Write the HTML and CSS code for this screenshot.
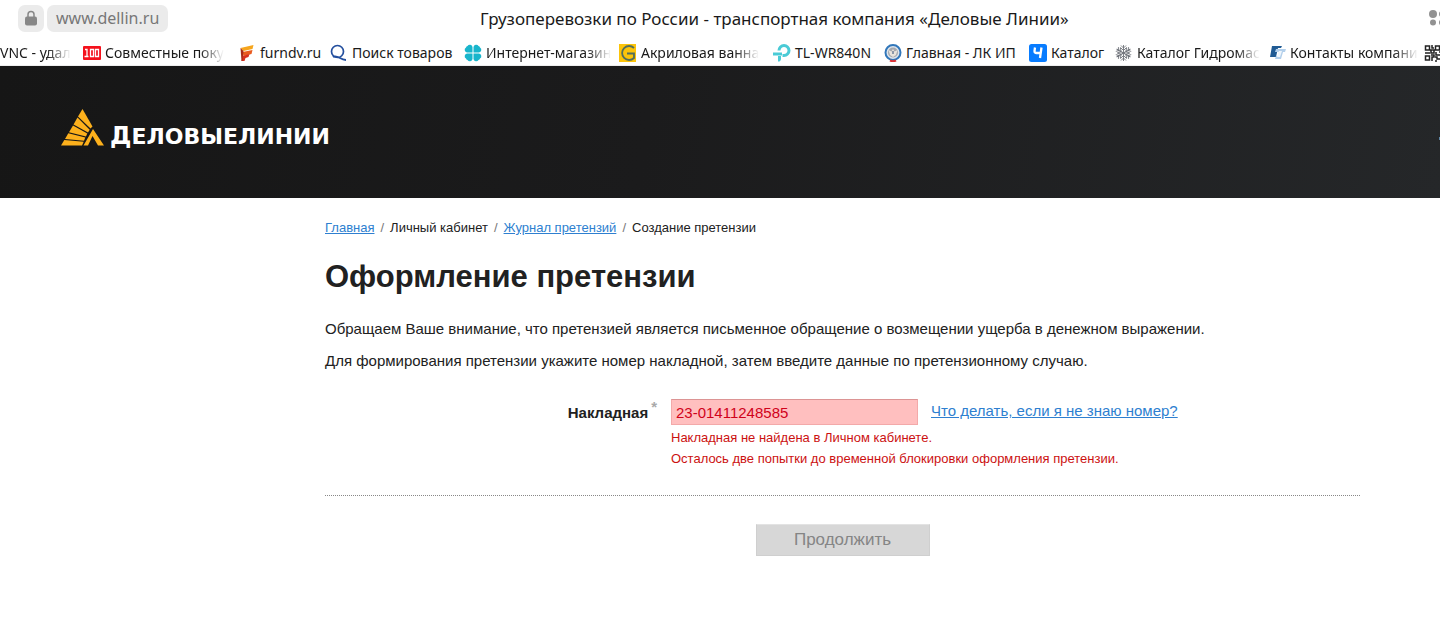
FILE: index.html
```html
<!DOCTYPE html>
<html lang="ru">
<head>
<meta charset="utf-8">
<title>Грузоперевозки по России - транспортная компания «Деловые Линии»</title>
<link rel="stylesheet" href="styles.css">
</head>
<body>
<div class="browser">
  <div class="address-bar">
    <div class="address">
      <button class="lock" type="button" aria-label="Безопасное соединение">
        <svg width="12" height="16" viewBox="0 0 12 16"><path d="M3 7V4.500a3 3 0 0 1 6 0V7" fill="none" stroke="#878787" stroke-width="1.500"/><rect x="0" y="6.500" width="12" height="9" rx="2" fill="#878787"/></svg>
      </button>
      <button class="host" type="button">www.dellin.ru</button>
    </div>
    <div class="page-title">Грузоперевозки по России - транспортная компания «Деловые Линии»</div>
    <button class="menu" type="button" aria-label="Меню">
      <svg width="11" height="18" viewBox="0 0 11 18" fill="#929292"><circle cx="4" cy="5" r="4"/><circle cx="4" cy="13.500" r="3"/><circle cx="13" cy="5" r="3"/><circle cx="13" cy="13.500" r="3"/></svg>
    </button>
  </div>
  <nav class="bookmarks" aria-label="Закладки">
    <a class="bookmark" href="#"><span class="label fade">VNC - удал</span></a>
    <a class="bookmark" href="#">
      <svg class="icon" viewBox="0 0 18 18"><rect y="2" width="18" height="14" rx="1" fill="#f5121d"/><path d="M2 5.500h2v7M1.500 12.500h4M7.500 5.500h3v7h-3zM12.500 5.500h3v7h-3z" fill="none" stroke="#fff" stroke-width="1.300"/></svg>
      <span class="label fade">Совместные поку</span></a>
    <a class="bookmark" href="#">
      <svg class="icon narrow" viewBox="0 0 15 18"><path d="M0 4L13 1l-1 4-9 2z" fill="#f6a51c"/><path d="M2 8l10-2-1 4-8 2z" fill="#e95c20"/><path d="M2 12l7-2-1 3-3 1-1 3H1z" fill="#d8301e"/><path d="M0 4l3 3-1 10H1z" fill="#a82a18"/></svg>
      <span class="label">furndv.ru</span></a>
    <a class="bookmark" href="#">
      <svg class="icon" viewBox="0 0 18 18"><ellipse cx="7.500" cy="7.500" rx="6" ry="6" fill="none" stroke="#244f9e" stroke-width="1.700"/><path d="M3 13c4-3 7 3 13 3" fill="none" stroke="#244f9e" stroke-width="1.800"/></svg>
      <span class="label">Поиск товаров</span></a>
    <a class="bookmark" href="#">
      <svg class="icon" viewBox="0 0 18 18" fill="#19b5cc"><g id="leaf"><path d="M8.500 8.500H3A2.700 2.700 0 0 1 2 3.500 2 2 0 0 1 3.500 2 2.700 2.700 0 0 1 8.500 3z"/></g><use href="#leaf" transform="rotate(90 9 9)"/><use href="#leaf" transform="rotate(180 9 9)"/><use href="#leaf" transform="rotate(270 9 9)"/></svg>
      <span class="label fade">Интернет-магазин</span></a>
    <a class="bookmark" href="#">
      <svg class="icon" viewBox="0 0 18 18"><rect width="17" height="18" fill="#fcc40a"/><path d="M15 4A7 7 0 1 0 15 14V9.500H8" fill="none" stroke="#526e5e" stroke-width="1.800"/></svg>
      <span class="label fade">Акриловая ванна</span></a>
    <a class="bookmark" href="#">
      <svg class="icon" viewBox="0 0 18 18"><path d="M6 6.500a5 5 0 1 1 5 5H9.500" fill="none" stroke="#4acbd6" stroke-width="3"/><path d="M0 8.500h9v3H0zM5 12h3v3a2.500 2.500 0 0 1-3 2.500z" fill="#4acbd6"/></svg>
      <span class="label">TL-WR840N</span></a>
    <a class="bookmark" href="#">
      <svg class="icon" viewBox="0 0 18 18"><circle cx="9" cy="8.500" r="7.500" fill="#dde4ec" stroke="#3277ba" stroke-width="2"/><circle cx="9" cy="8.500" r="5" fill="#a5a8ae"/><path d="M4.500 6l3 1.500L9 5l1.500 2.500L13.500 6 12 11l-3 2-3-2z" fill="#e9e4dc"/><path d="M8 7h2v3H8z" fill="#8d98a9"/><path d="M6 16.500q3 1.500 6 0" fill="none" stroke="#dd3437" stroke-width="2"/></svg>
      <span class="label">Главная - ЛК ИП</span></a>
    <a class="bookmark" href="#">
      <svg class="icon" viewBox="0 0 18 18"><rect width="18" height="18" rx="2.500" fill="#087cff"/><path d="M6 3.500L5.500 7q0 2 2 2h3.500M12.500 3.500L11 14" fill="none" stroke="#fff" stroke-width="2.300"/></svg>
      <span class="label">Каталог</span></a>
    <a class="bookmark" href="#">
      <svg class="icon" viewBox="0 0 18 18" fill="none" stroke="#70747b" stroke-width="0.900"><g id="ray"><path d="M8.500 9V1M8.500 4L6 1.500M8.500 4L11 1.500M8.500 6.500L5.500 3.500M8.500 6.500l3-3"/></g><use href="#ray" transform="rotate(60 8.500 9)"/><use href="#ray" transform="rotate(120 8.500 9)"/><use href="#ray" transform="rotate(180 8.500 9)"/><use href="#ray" transform="rotate(240 8.500 9)"/><use href="#ray" transform="rotate(300 8.500 9)"/></svg>
      <span class="label fade">Каталог Гидромас</span></a>
    <a class="bookmark" href="#">
      <svg class="icon narrow" viewBox="0 0 16 18"><path d="M2 2h10l-1 2H8L6 13H0z" fill="#205b94"/><path d="M6 5h10l-1 3h-2l-2 7H5l1-3h2l1-4H5z" fill="#b2cfeb"/><path d="M9 7h3l-2 6H7z" fill="#eff6fc"/></svg>
      <span class="label fade">Контакты компани</span></a>
    <a class="bookmark" href="#" aria-label="QR-код">
      <svg class="icon" viewBox="0 0 18 18" fill="none" stroke="#222" stroke-width="1.500"><path d="M1.500 2h4v4h-4zM11.500 2h4v4h-4zM1.500 12h4v4h-4zM8 1v3h2M7 6h3v3H7zM1 9h3M12 8v3h4M7 11h3v2H8v4M11 13h2v2h3M11 17h2M15 8h3M5 8v2"/></svg></a>
  </nav>
</div>

<header class="site-header">
  <a class="logo" href="#" aria-label="Деловые Линии">
    <svg class="mark" width="43" height="38" viewBox="0 0 43 38" fill="#fcb01c"><path d="M21.500 0L29.500 14 31.500 17.500 29.500 19.500 17 7.500z"/><path d="M16.500 8.500L28.700 20.700 27 23.500 12.500 15.500z"/><path d="M12 16.500L26.300 24.600 25 27.500 8 23.300z"/><path d="M7.300 24.300L24.300 28.600 23 31.800 4 30z"/><path d="M3.300 31L22.700 32.800 21 36.500H0z"/><path d="M32 20L43 36.500h-6L31.500 27 27 36.500h-4.500z"/></svg>
    <span class="wordmark"><span class="initial">Д</span>ЕЛОВЫЕЛИНИИ</span>
  </a>
  <span class="edge-mark"></span>
</header>

<main class="content">
  <nav class="crumbs" aria-label="Навигация">
    <a href="#">Главная</a><span class="slash">/</span><span>Личный кабинет</span><span class="slash">/</span><a href="#">Журнал претензий</a><span class="slash">/</span><span>Создание претензии</span>
  </nav>
  <h1>Оформление претензии</h1>
  <p>Обращаем Ваше внимание, что претензией является письменное обращение о возмещении ущерба в денежном выражении.</p>
  <p>Для формирования претензии укажите номер накладной, затем введите данные по претензионному случаю.</p>
  <form>
    <div class="field">
      <label for="waybill">Накладная<span class="required">*</span></label>
      <div class="control">
        <div class="entry">
          <input id="waybill" type="text" value="23-01411248585" aria-describedby="waybill-error">
          <a href="#">Что делать, если я не знаю номер?</a>
        </div>
        <div class="error" id="waybill-error">Накладная не найдена в Личном кабинете.<br>Осталось две попытки до временной блокировки оформления претензии.</div>
      </div>
    </div>
    <div class="actions"><button class="submit" type="submit" disabled>Продолжить</button></div>
  </form>
</main>
</body>
</html>
```

FILE: styles.css
```css
* { box-sizing: border-box; }
body { margin: 0; background: #fff; color: #212121; font-family: "Liberation Sans", Arial, sans-serif; overflow-x: hidden; }
button { border: 0; padding: 0; font: inherit; }
a { color: #2e7fd0; }

.browser { font-family: "Noto Sans", "Open Sans", sans-serif; color: #1a1a1a; border-bottom: 1px solid #eee; }
.address-bar { display: grid; grid-template-columns: 480px 1fr 11px; align-items: center; height: 36px; }
.address { display: flex; gap: 3px; padding-left: 18px; }
.lock, .host { height: 27px; border-radius: 7px; background: #ebebeb; color: #777; }
.lock { width: 26px; display: flex; align-items: center; justify-content: center; }
.host { padding: 0 9px; font-size: 16px; line-height: 27px; }
.page-title { font-size: 17px; white-space: nowrap; }
.menu { background: none; display: flex; }

.bookmarks { display: grid; grid-template-columns: 83px 157px 90px 134px 155px 154px 111px 145px 86px 155px 154px 18px; height: 29px; padding-top: 4px; align-items: center; }
.bookmark { display: flex; align-items: center; gap: 4px; color: inherit; text-decoration: none; font-size: 14px; line-height: 20px; white-space: nowrap; min-width: 0; }
.icon { width: 18px; height: 18px; flex: none; }
.narrow { width: 16px; }
.fade { -webkit-mask-image: linear-gradient(to left, transparent, #000 24px); mask-image: linear-gradient(to left, transparent, #000 24px); }

.site-header { display: flex; align-items: center; justify-content: space-between; height: 132px; padding: 0 0 8px 61px; background: linear-gradient(100deg, #161616, #1b1b1c 45%, #252729); }
.logo { display: flex; align-items: flex-end; gap: 6px; color: #fff; text-decoration: none; }
.mark { display: block; }
.wordmark { font-family: "DejaVu Sans", sans-serif; font-weight: 700; font-size: 22px; line-height: 20px; }
.initial { font-size: 24px; }
.edge-mark { width: 1px; height: 3px; margin-top: 20px; background: #5f86a5; }

.content { padding: 20px 80px 40px 325px; }
.crumbs { font-size: 13px; line-height: 20px; }
.slash { margin: 0 6px; color: #777; }
h1 { margin: 20px 0 23px; font-size: 31px; line-height: 38px; }
p { margin: 0 0 12px; font-size: 15px; line-height: 20px; }
.field { display: grid; grid-template-columns: 332px 1fr; column-gap: 14px; padding: 16px 0 26px; border-bottom: 1px dotted #888; }
label { text-align: right; font-size: 15px; line-height: 26px; font-weight: 700; }
.required { display: inline-block; margin-left: 3px; color: #aaa; line-height: 16px; vertical-align: 6px; }
.entry { display: flex; gap: 13px; line-height: 24px; font-size: 15px; }
input { width: 247px; height: 26px; padding: 0 4px; border: 1px solid #f3a9a9; border-top-color: #dc9494; border-radius: 0; background: #ffbfbf; color: #d0021b; font: inherit; }
.error { margin-top: 2px; color: #cc1111; font-size: 13px; line-height: 21px; }
.actions { display: flex; justify-content: center; padding-top: 28px; }
.submit { width: 174px; height: 32px; border: 1px solid #cfcfcf; border-top-color: #e3e3e3; background: #d7d7d7; color: #858585; font-size: 17px; }
```
